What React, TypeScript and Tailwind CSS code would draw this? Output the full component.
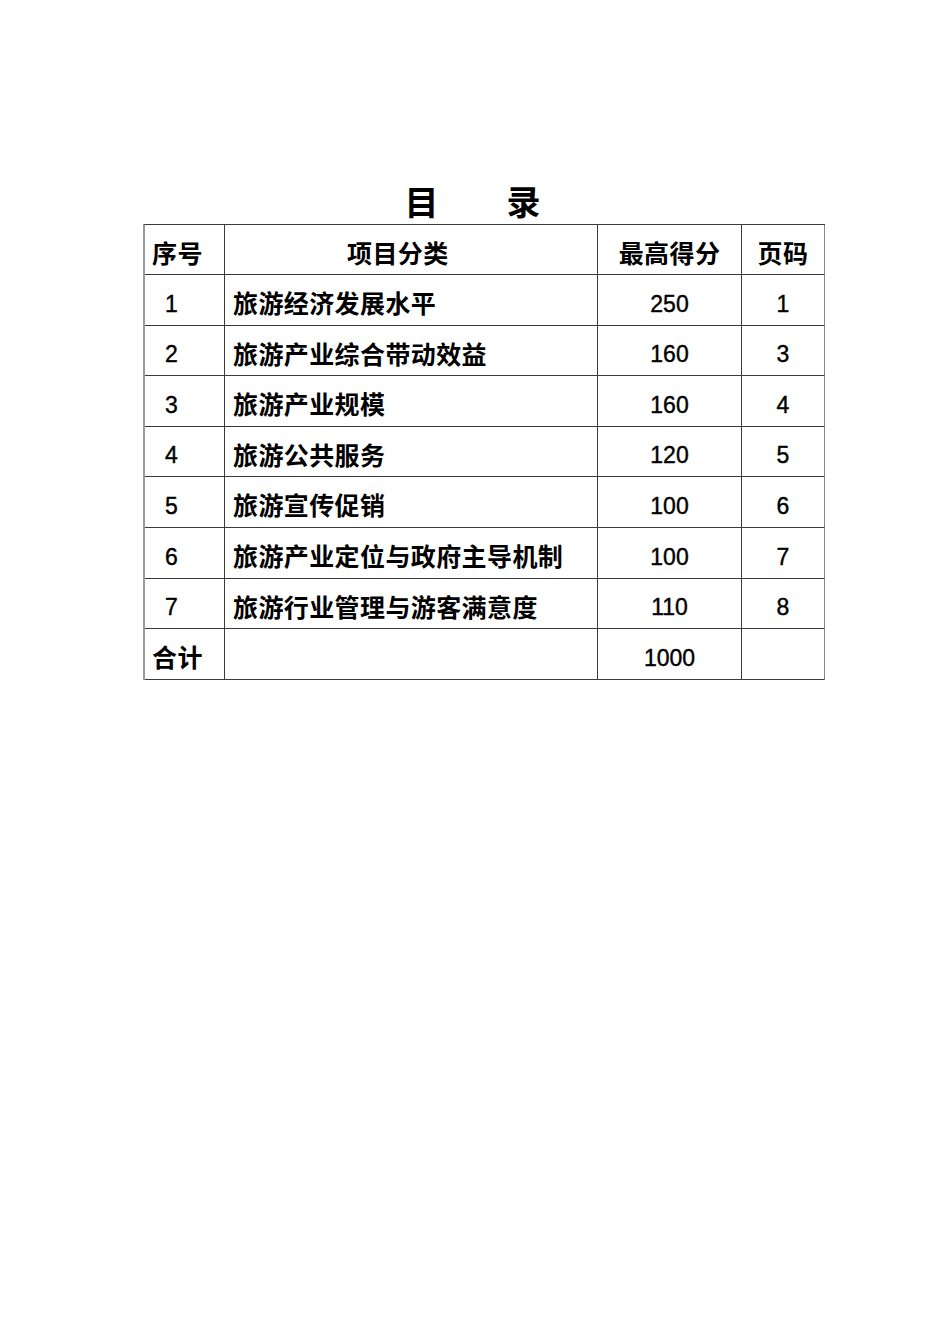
const rows = [
  { no: '1', name: '旅游经济发展水平', score: '250', page: '1' },
  { no: '2', name: '旅游产业综合带动效益', score: '160', page: '3' },
  { no: '3', name: '旅游产业规模', score: '160', page: '4' },
  { no: '4', name: '旅游公共服务', score: '120', page: '5' },
  { no: '5', name: '旅游宣传促销', score: '100', page: '6' },
  { no: '6', name: '旅游产业定位与政府主导机制', score: '100', page: '7' },
  { no: '7', name: '旅游行业管理与游客满意度', score: '110', page: '8' },
];

const cjk = "font-['Noto_Sans_CJK_SC',sans-serif] font-bold text-[25px] tracking-[0.4px] leading-none";
const num = "mt-[3px] font-['Liberation_Sans',Arial,sans-serif] text-[23px] leading-none [-webkit-text-stroke:0.4px_black]";
const cell = 'flex items-center border-r border-b border-[#3a3a3a] pt-[5px]';

export default function App() {
  return (
    <div className="min-h-[1344px] bg-white text-black">
      <div className="pt-[184px] pl-[143px]">
        <div className="w-[682px]">
          <h1 className="flex justify-center gap-[68px] pr-[23px] mb-[6px] h-[34px] font-['Noto_Sans_CJK_SC',sans-serif] font-bold text-[34px] leading-none">
            <span>目</span>
            <span>录</span>
          </h1>

          <div className="grid grid-cols-[80px_373px_144px_83px] grid-rows-[50px_51px_50px_51px_50px_51px_51px_50px_51px] border-l-2 border-t border-l-[#9a9a9a] border-t-[#3a3a3a]">
            {/* header */}
            <div className={`${cell} pl-[7px]`}>
              <span className={cjk}>序号</span>
            </div>
            <div className={`${cell} pl-[122px]`}>
              <span className={cjk}>项目分类</span>
            </div>
            <div className={`${cell} justify-center`}>
              <span className={cjk}>最高得分</span>
            </div>
            <div className={`${cell} justify-center border-r-[#8a8a8a]`}>
              <span className={cjk}>页码</span>
            </div>

            {rows.map((r) => (
              <>
                <div key={r.no + 'a'} className={`${cell} pl-[20px]`}>
                  <span className={num}>{r.no}</span>
                </div>
                <div key={r.no + 'b'} className={`${cell} pl-[8px]`}>
                  <span className={cjk}>{r.name}</span>
                </div>
                <div key={r.no + 'c'} className={`${cell} justify-center`}>
                  <span className={num}>{r.score}</span>
                </div>
                <div key={r.no + 'd'} className={`${cell} justify-center border-r-[#8a8a8a]`}>
                  <span className={num}>{r.page}</span>
                </div>
              </>
            ))}

            {/* total */}
            <div className={`${cell} pl-[7px]`}>
              <span className={cjk}>合计</span>
            </div>
            <div className={cell} />
            <div className={`${cell} justify-center`}>
              <span className={num}>1000</span>
            </div>
            <div className={`${cell} border-r-[#8a8a8a]`} />
          </div>
        </div>
      </div>
    </div>
  );
}
